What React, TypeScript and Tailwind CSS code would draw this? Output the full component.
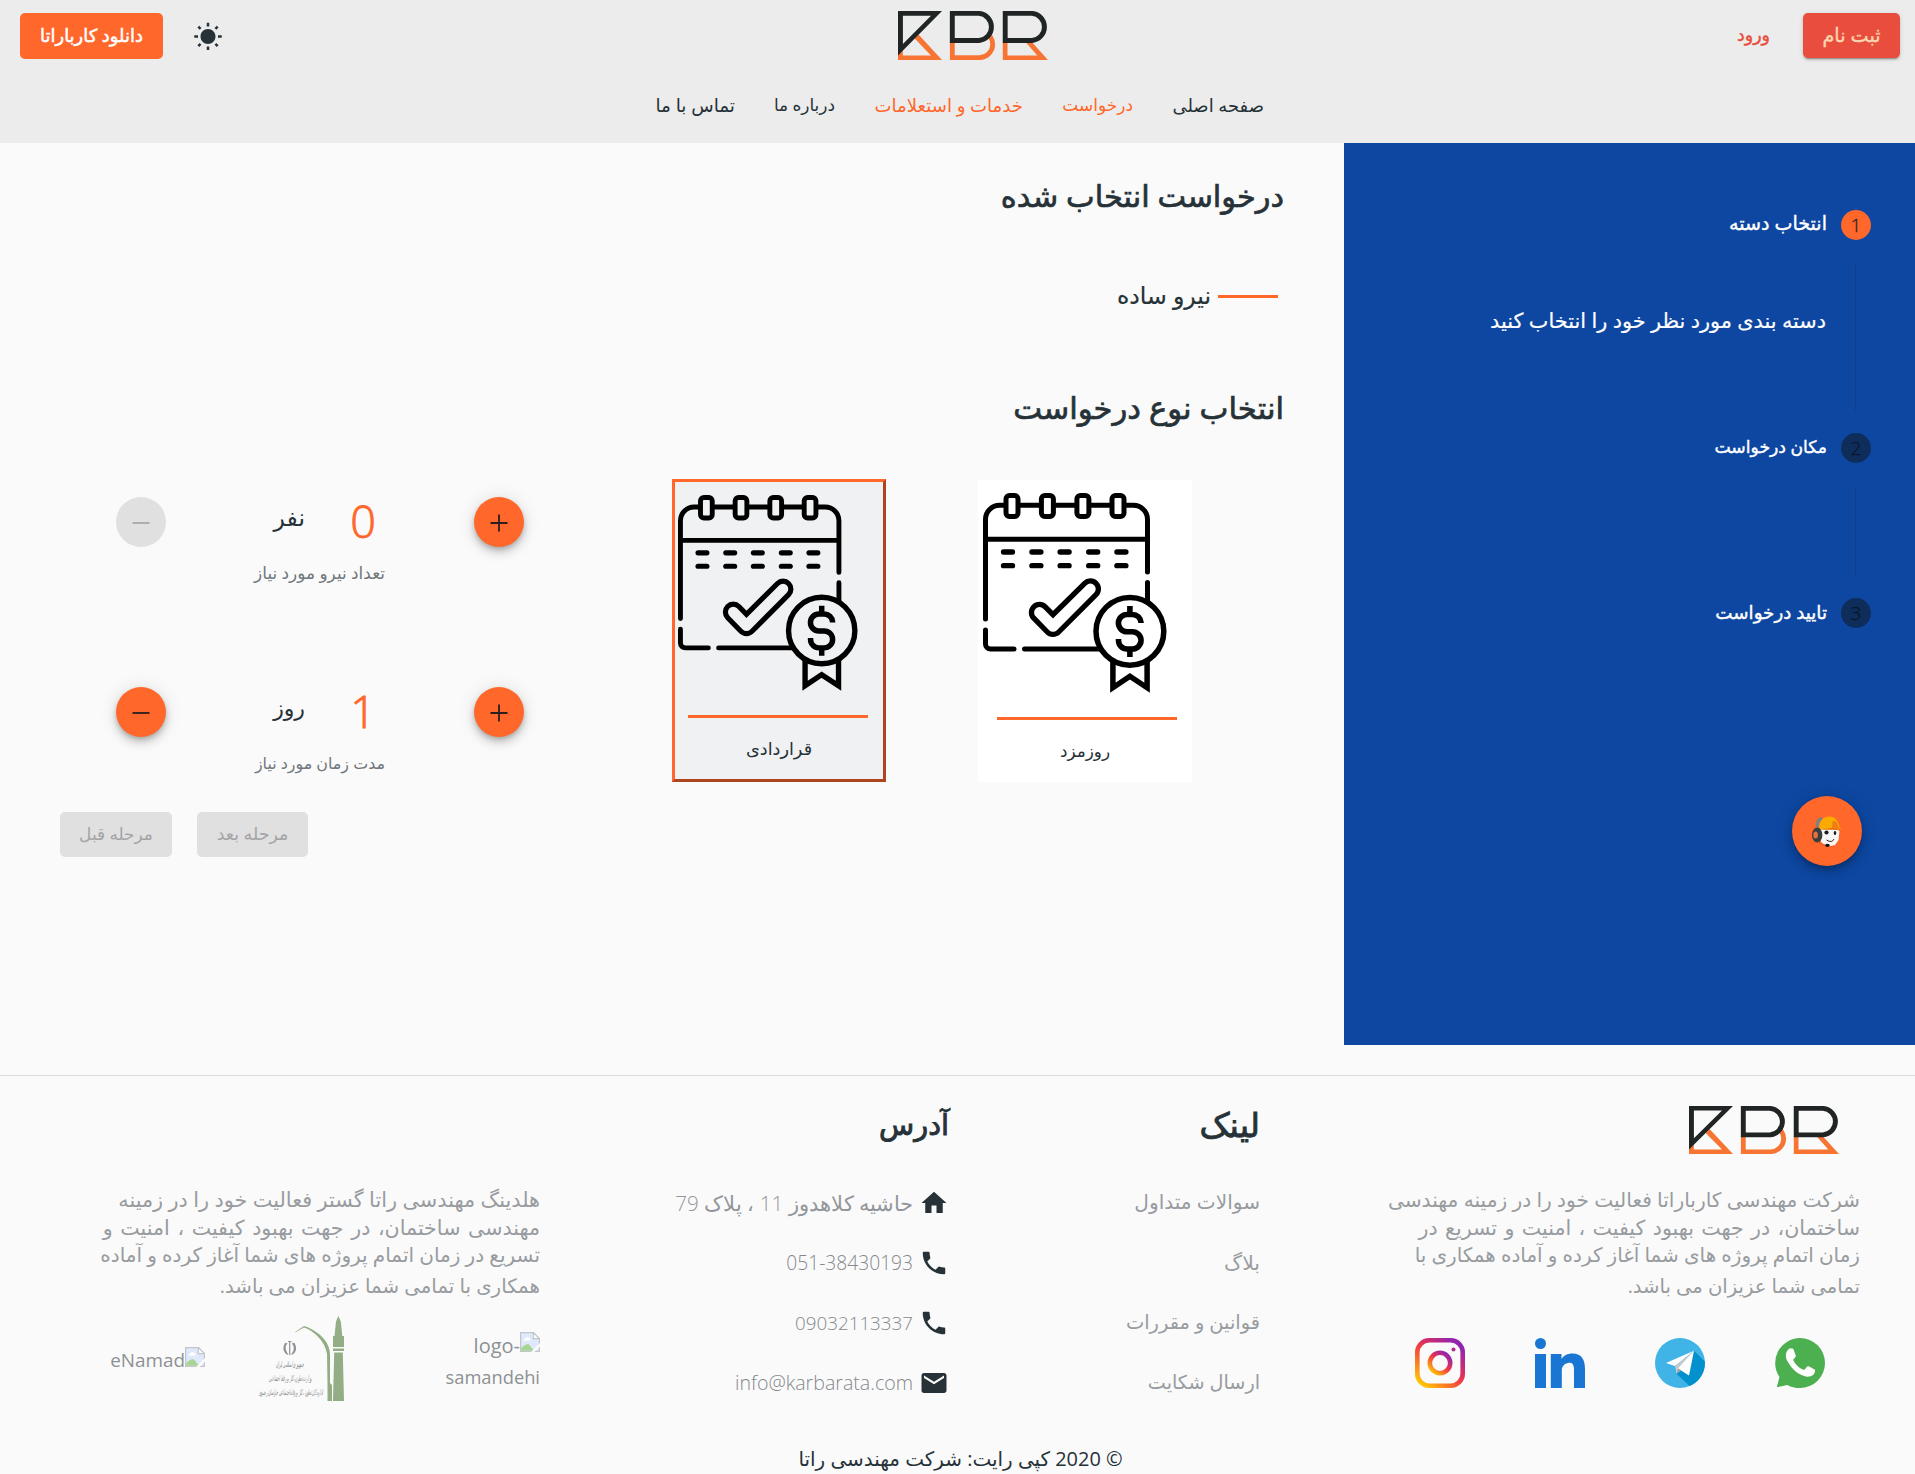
import type { ReactNode } from "react";

const FONT = "font-['Open_Sans','DejaVu_Sans',sans-serif]";

function Logo({ className }: { className?: string }) {
  return (
    <svg viewBox="0 0 150 49" preserveAspectRatio="none" className={className} aria-label="KBR">
      <g fill="#f77433">
        <path d="M0 43.5V49H44L20.500 23.500 16.700 27.500 33 44.500H4.800V38z" />
        <path d="M104.800 31V49H150L133.800 31H127.500L139.300 44.500H109.500V31z" />
      </g>
      <path d="M54.300 30V46.700H81.500A13.500 13.500 0 0 0 94.700 33.500C94.700 30 93.600 27.400 92 25" fill="none" stroke="#f77433" strokeWidth="4.800" />
      <path fillRule="evenodd" fill="#212424" d="M0 0H44L0 44.500zM4.900 4.700V33L33 4.700z" />
      <g fill="none" stroke="#212424" strokeWidth="4.900">
        <path d="M54.300 2.400H81A13.600 13.600 0 0 1 81 29.500H54.300z" />
        <path d="M107.200 2.400H134A13.600 13.600 0 0 1 134 29.500H107.200z" />
      </g>
    </svg>
  );
}

function SunIcon() {
  return (
    <svg viewBox="0 0 24 24" className="mt-px size-[30px]" fill="#263238">
      <path d="M6.760 4.840l-1.800-1.790-1.410 1.410 1.790 1.790 1.420-1.410zM4 10.500H1v2h3v-2zm9-9.950h-2V3.500h2V.550zm7.450 3.910l-1.410-1.410-1.790 1.790 1.410 1.410 1.790-1.790zm-3.210 13.700l1.790 1.800 1.410-1.410-1.800-1.790-1.400 1.400zM20 10.500v2h3v-2h-3zm-8-5c-3.310 0-6 2.690-6 6s2.690 6 6 6 6-2.690 6-6-2.690-6-6-6zm-1 16.950h2V19.500h-2v2.950zm-7.450-3.910l1.410 1.410 1.790-1.800-1.410-1.410-1.790 1.800z" />
    </svg>
  );
}

function CalendarIcon({ className }: { className?: string }) {
  return (
    <svg viewBox="0 0 184 200" preserveAspectRatio="none" className={className} fill="none" stroke="#000" strokeWidth="5">
      <path strokeLinecap="round" d="M2.500 126V26.300A14 14 0 0 1 16.500 12.300H21M37.500 12.300H56M73 12.300H91.500M108.500 12.300H126.500M143.500 12.300H150.500A14 14 0 0 1 164.500 26.300V79M164.500 89.500V109M2.500 137V151A5 5 0 0 0 7.500 156H31M41.500 156H118" />
      <path d="M2.500 46.300H164" />
      {[29, 64.4, 99.9, 135].map((x) => (
        <rect key={x} x={x - 6} y="2.500" width="12" height="21" rx="3.500" />
      ))}
      {[59, 72.7].map((y) =>
        [25, 53.4, 81.6, 110.2, 138.4].map((x) => (
          <path key={`${x}-${y}`} strokeLinecap="round" strokeWidth="5.300" d={`M${x - 4.5} ${y}h9`} />
        )),
      )}
      <path strokeWidth="5.300" d="M62.200 113.800L70 121.700 101.700 90.300A8 8 0 0 1 113 101.700L75.700 139A8 8 0 0 1 64.300 139L50.800 125.200A8 8 0 0 1 62.200 113.800z" />
      <circle cx="146.900" cy="138.300" r="33.900" strokeWidth="5.500" />
      <path strokeWidth="5.600" d="M158 130V129.500A8.500 8.500 0 0 0 149.500 121.500H144A8.600 8.600 0 0 0 144 138.700H149.400A8.600 8.600 0 0 1 149.400 156H144A8.600 8.600 0 0 1 135.500 147.500V146M146.900 113v8M146.900 156v8" />
      <path strokeWidth="5.500" d="M129.900 168V194.700L146.900 183.300 164.100 194.700V168" />
    </svg>
  );
}

function WorkerIcon() {
  return (
    <svg viewBox="0 0 30 31" className="h-[31px] w-[30px]">
      <path d="M8 15.500Q7 24 10 27L16 30.500 23 29 26.500 24 27.500 15 24 12H9z" fill="#f7f7f7" />
      <path d="M4 11C3 5 5 2 10 1L11 4C7 5 7 8 7.500 12z" fill="#7d8284" />
      <path d="M7 12.500C7 4 12 .5 17.500 .5S26.500 4.500 27.500 11.500L30 14 24 13 7 13.500z" fill="#fbab00" />
      <path d="M20.500 5.500C23 4 25.500 6 26.500 11.500L30 14 20 12.500z" fill="#ef7d14" />
      <path d="M8 13.500L20 12 30 14.500 20 13.800z" fill="#e56c0c" />
      <ellipse cx="5.200" cy="19" rx="5.200" ry="7.500" fill="#3b3d40" />
      <ellipse cx="3.600" cy="19" rx="2.300" ry="3.600" fill="#e7713b" />
      <circle cx="14.500" cy="16.500" r="2.100" fill="#1d1d1d" />
      <ellipse cx="23" cy="17" rx="1.300" ry="2" fill="#1d1d1d" />
      <path d="M14.500 24Q20 27.500 22 23" fill="none" stroke="#4a2a1c" strokeWidth="1" />
      <path d="M6 26Q10 29.500 15 29.500" fill="none" stroke="#d65c28" strokeWidth="1" />
      <ellipse cx="15.500" cy="29.300" rx="2.300" ry="1.600" fill="#141414" />
    </svg>
  );
}

function WhatsappIcon() {
  return (
    <svg viewBox="2 2 20 20" className="size-[50px]">
      <path fill="#4caf50" d="M12 2a10 10 0 0 1 0 20c-1.970 0-3.500-.4-5.100-1.250L2.700 21.700l1.100-4.100A10 10 0 0 1 12 2" />
      <path
        fill="#fff"
        transform="translate(-2.300 -2.100) scale(1.180)"
        d="M16.750 13.960c.25.130.41.200.46.300.06.110.04.610-.21 1.180-.2.560-1.240 1.100-1.700 1.120-.46.020-.47.360-2.960-.73-2.490-1.090-3.990-3.750-4.110-3.920-.12-.17-.96-1.380-.92-2.610.05-1.220.69-1.800.95-2.040.24-.26.51-.29.68-.26h.47c.15 0 .36-.06.55.450l.69 1.870c.06.130.1.280.01.440l-.27.410-.39.420c-.12.120-.26.250-.12.500.12.260.62 1.090 1.320 1.780.91.880 1.710 1.170 1.950 1.300.24.140.39.120.54-.04l.81-.94c.19-.25.35-.19.58-.11l1.670.88z"
      />
    </svg>
  );
}

function TelegramIcon() {
  return (
    <svg viewBox="0 0 50 50" className="size-[50px]">
      <circle cx="25" cy="25" r="25" fill="#40b4e6" />
      <path d="M39 12.700L49.900 23.500A25 25 0 0 1 34.500 48.100L21.500 35.700 30 26z" fill="#0391ce" />
      <path d="M11 25L39 12.700 20 28z" fill="#fff" />
      <path d="M20 28L39 12.700 21.700 35.800z" fill="#c3cacf" />
      <path d="M23 30.500L39 12.700 34 37.500z" fill="#fff" />
      <path d="M21.700 35.800L23 30.500 26.500 32.300z" fill="#9aa5ab" />
    </svg>
  );
}

function LinkedinIcon() {
  return (
    <svg viewBox="0 0 50 50" className="size-[50px]" fill="#1976d2">
      <circle cx="5.500" cy="5.500" r="5.500" />
      <path d="M0 16H11V50H0zM15.800 16H26.500V21C28.500 17.700 32.300 15.500 37.500 15.500 47 15.500 50 22 50 31V50H39V32C39 27.500 38 24.800 34.500 24.800 30 24.800 26.800 28.500 26.800 32V50H15.800z" />
    </svg>
  );
}

function InstagramIcon() {
  return (
    <svg viewBox="0 0 50 50" className="size-[50px]">
      <defs>
        <linearGradient id="ig" x1="0.100" y1="0.950" x2="0.850" y2="0.050">
          <stop offset="0" stopColor="#ffc107" />
          <stop offset="0.450" stopColor="#f4473a" />
          <stop offset="0.600" stopColor="#e0305a" />
          <stop offset="1" stopColor="#9225b0" />
        </linearGradient>
      </defs>
      <g fill="none" stroke="url(#ig)" strokeWidth="4.600">
        <rect x="2.300" y="2.300" width="45.400" height="45.400" rx="12" />
        <circle cx="25" cy="25" r="10.200" />
      </g>
      <circle cx="38.500" cy="11.500" r="2" fill="#b02a92" />
    </svg>
  );
}

function EmblemIcon() {
  return (
    <svg viewBox="0 0 85 85" className="mt-[17px] h-[85px] w-[85px] overflow-visible" direction="rtl">
      <g fill="#93ad85">
        <path d="M79.300 0L81.800 5.500 83.300 20H85V31H74V20H75.500L77 5.500zM74 32.500H85V35H74zM75.200 36.500H83.800L85 85H74z" />
        <path d="M36 16L45 10C58 14 71 25 71 38V67L73 69V85H68.500V68.500L68 38C66 25 55 15 45 11.500L36.500 16.200z" />
      </g>
      <g fill="none" stroke="#8f9296" strokeWidth="1.200">
        <path d="M30.700 26V39M28 27Q24 32 28 37.500M33.400 27Q37.500 32 33.400 37.500M26.500 27Q22.500 35 29 38.500M35 27Q39 35 32.500 38.500M29 25.500h3.500" />
      </g>
      <g fill="#808386" fontSize="8" fontStyle="italic">
        <text x="45" y="51" textLength="28" lengthAdjust="spacingAndGlyphs">جمهوری اسلامی ایران</text>
        <text x="53" y="65" textLength="43" lengthAdjust="spacingAndGlyphs">وزارت تعاون، کار و رفاه اجتماعی</text>
        <text x="64" y="79" textLength="64" lengthAdjust="spacingAndGlyphs">اداره کل تعاون، کار و رفاه اجتماعی خراسان رضوی</text>
      </g>
    </svg>
  );
}

function BrokenImage() {
  return (
    <svg viewBox="0 0 20 20" className="-mt-2 size-5 shrink-0">
      <path d="M.6 .6H13.500L19.400 6.500V19.400H.6z" fill="#dfe9fb" stroke="#c3c5c8" strokeWidth="1.200" />
      <path d="M13.300 .6V6.700H19.400z" fill="#fff" stroke="#c3c5c8" strokeWidth="1.200" />
      <path d="M3.500 8.500Q3.500 6.500 5.500 6.500 6.500 4 8.500 5.500 11 5.500 10.500 8.500z" fill="#fff" />
      <path d="M1.200 18.800V16Q6 11 9 12.500L14 18.800z" fill="#a8d494" />
      <path d="M11 20L20 11V14.500L14.500 20z" fill="#fafafa" />
    </svg>
  );
}

const glyphs = {
  home: "M10 20v-6h4v6h5v-8h3L12 3 2 12h3v8z",
  phone: "M6.620 10.790c1.440 2.830 3.760 5.140 6.590 6.590l2.200-2.200c.27-.27.67-.36 1.020-.24 1.120.37 2.330.57 3.570.57.55 0 1 .45 1 1V20c0 .55-.45 1-1 1-9.390 0-17-7.610-17-17 0-.55.45-1 1-1h3.500c.55 0 1 .45 1 1 0 1.250.2 2.450.57 3.570.11.350.03.740-.25 1.020l-2.200 2.200z",
  mail: "M20 4H4c-1.100 0-1.990.9-1.990 2L2 18c0 1.100.9 2 2 2h16c1.100 0 2-.9 2-2V6c0-1.100-.9-2-2-2zm0 4l-8 5-8-5V6l8 5 8-5v2z",
};

const nav = [
  { text: "صفحه اصلی", cls: "w-[91px] text-[18px] text-[#263238]" },
  { text: "درخواست", cls: "w-[70px] text-[17px] text-[#ff672b]" },
  { text: "خدمات و استعلامات", cls: "w-[148px] text-[18.100px] text-[#ff672b]" },
  { text: "درباره ما", cls: "w-[60px] text-[16.900px] text-[#263238]" },
  { text: "تماس با ما", cls: "w-[79px] text-[18.400px] text-[#263238]" },
];

function StepHead({ n, active, label, cls }: { n: number; active?: boolean; label: string; cls: string }) {
  return (
    <div className="flex h-[30px] items-center gap-[14px]">
      <span
        className={`flex size-[30px] items-center justify-center rounded-full pt-px text-[19px] ${
          active ? "bg-[#ff672b] font-light text-[#33231f] [-webkit-text-stroke:0.3px_#33231f]" : "bg-[#0f2d5b] font-light text-[#091528] [-webkit-text-stroke:0.3px_#091528]"
        }`}
      >
        {n}
      </span>
      <span className={`pb-[3px] text-white [-webkit-text-stroke:0.4px_white] ${cls}`}>{label}</span>
    </div>
  );
}

function RoundButton({ sign, disabled }: { sign: "+" | "-"; disabled?: boolean }) {
  return (
    <button
      className={`flex size-[50px] shrink-0 items-center justify-center rounded-full ${
        disabled
          ? "bg-[#e0e0e0] text-[#a9a9a9]"
          : "bg-[#ff672b] text-[#2b1e1c] shadow-[0_3px_5px_-1px_rgba(0,0,0,0.2),0_6px_10px_0_rgba(0,0,0,0.14),0_1px_18px_0_rgba(0,0,0,0.12)]"
      }`}
    >
      <svg viewBox="0 0 18 18" className="mt-[2px] size-[18px]" stroke="currentColor" strokeWidth="1.800">
        <path d={sign === "+" ? "M.5 9H17.500M9 .5V17.500" : "M.5 9H17.500"} />
      </svg>
    </button>
  );
}

function Counter({ value, unit, unitCls, caption, captionCls, minusDisabled }: {
  value: number; unit: string; unitCls: string; caption: string; captionCls: string; minusDisabled?: boolean;
}) {
  return (
    <div className="h-[190px] w-[408px]">
      <div className="flex h-[50px] items-center">
        <RoundButton sign="+" />
        <span className="mr-[98px] w-[26px] pb-[3px] text-center text-[45px] leading-[50px] font-light text-[#ff672b] [-webkit-text-stroke:0.9px_#ff672b]">{value}</span>
        <span className={`mr-[45px] pb-[10px] leading-[30px] text-[#263238] ${unitCls}`}>{unit}</span>
        <div className="mr-auto">
          <RoundButton sign="-" disabled={minusDisabled} />
        </div>
      </div>
      <p className={`mt-[14px] mr-[139px] leading-6 text-[#70767a] ${captionCls}`}>{caption}</p>
    </div>
  );
}

function Line({ children, cls }: { children: ReactNode; cls: string }) {
  return <p className={`leading-7 whitespace-nowrap ${cls}`}>{children}</p>;
}

export default function App() {
  return (
    <div dir="rtl" className={`h-[1474px] w-full overflow-hidden bg-[#fafafa] text-[#263238] ${FONT}`}>
      <header className="h-[143px] bg-[#ececec]">
        <div className="flex h-[72px] items-start">
          <div className="flex w-[867px] items-center gap-[33px] pt-[13px] pr-[15px]">
            <button className="h-[45px] w-[97px] rounded-[5px] bg-[#e84d3d] pb-[2px] text-[19.200px] leading-[43px] text-[#fcd5ae] shadow-[0_3px_1px_-2px_rgba(0,0,0,0.2),0_2px_2px_0_rgba(0,0,0,0.14),0_1px_5px_0_rgba(0,0,0,0.12)] [-webkit-text-stroke:0.4px_#fcd5ae]">
              ثبت نام
            </button>
            <a className="pb-[2px] text-[17.400px] text-[#e84d3d] [-webkit-text-stroke:0.4px_#e84d3d]">ورود</a>
          </div>
          <Logo className="mt-[11px] h-[49px] w-[150px]" />
          <div className="flex flex-1 items-center justify-end gap-[30px] pt-[13px] pl-5">
            <SunIcon />
            <button className="h-[46px] w-[143px] rounded-[5px] bg-[#ff672b] pb-px text-[17.900px] leading-[45px] text-white [-webkit-text-stroke:0.5px_white]">
              دانلود کارباراتا
            </button>
          </div>
        </div>
        <nav className="flex h-[66px] items-center gap-10 pr-[651px] leading-8 whitespace-nowrap">
          {nav.map((n) => (
            <a key={n.text} className={n.cls}>{n.text}</a>
          ))}
        </nav>
      </header>

      <section className="flex h-[902px]">
        <aside className="relative w-[571px] bg-[#0d47a1] pt-[67px] pr-[44px]">
          <StepHead n={1} active label="انتخاب دسته" cls="text-[19.100px]" />
          <div className="mt-[23px] mr-[15px] mb-[22px] h-[148px] border-r border-[#123f8c] pt-[42px] pr-[29px] text-[20.800px] leading-[30px] text-white [-webkit-text-stroke:0.2px_white]">
            دسته بندی مورد نظر خود را انتخاب کنید
          </div>
          <StepHead n={2} label="مکان درخواست" cls="text-[17.200px]" />
          <div className="mt-[23px] mr-[15px] mb-[22px] h-[90px] border-r border-[#123f8c]" />
          <StepHead n={3} label="تایید درخواست" cls="text-[18.300px]" />
          <button className="absolute top-[653px] right-[53px] flex size-[70px] items-center justify-center rounded-full bg-[#ff672b] shadow-[0_3px_5px_-1px_rgba(0,0,0,0.2),0_6px_10px_0_rgba(0,0,0,0.14),0_1px_18px_0_rgba(0,0,0,0.12)]">
            <WorkerIcon />
          </button>
        </aside>

        <main className="flex-1 pt-[33px]">
          <h2 className="pr-[60px] text-[30.400px] leading-10 [-webkit-text-stroke:0.7px_#263238]">درخواست انتخاب شده</h2>
          <div className="mt-[64px] flex h-[30px] items-center gap-[7px] pr-[66px]">
            <span className="mt-[3px] h-[3px] w-[60px] bg-[#ff672b]" />
            <span className="text-[23.600px] leading-[30px] [-webkit-text-stroke:0.2px_#263238]">نیرو ساده</span>
          </div>
          <h2 className="mt-[77px] pr-[60px] text-[30.700px] leading-10 [-webkit-text-stroke:0.7px_#263238]">انتخاب نوع درخواست</h2>

          <div className="mt-[52px] flex h-[303px] pr-[152px]">
            <div className="mt-px h-[302px] w-[214px] bg-white pt-[13px]">
              <CalendarIcon className="mr-[25px] h-[200px] w-[184px]" />
              <div className="mt-6 mr-[15px] h-[3px] w-[180px] bg-[#ff672b]" />
              <p className="mt-[16px] text-center text-[16.800px] leading-[30px]">روزمزد</p>
            </div>
            <div className="mr-[92px] h-[303px] w-[214px] border-[3px] border-t-[#ff672b] border-r-[#ad451f] border-b-[#ad451f] border-l-[#ff672b] bg-[#eff1f3] pt-[13px]">
              <CalendarIcon className="mr-[25px] h-[196px] w-[180px]" />
              <div className="mt-6 mr-[15px] h-[3px] w-[180px] bg-[#ff672b]" />
              <p className="mt-[15px] text-center text-[17.700px] leading-[30px]">قراردادی</p>
            </div>
            <div className="mr-[148px] pt-[18px]">
              <Counter value={0} unit="نفر" unitCls="text-[23.500px]" caption="تعداد نیرو مورد نیاز" captionCls="text-[16.900px]" minusDisabled />
              <Counter value={1} unit="روز" unitCls="text-[22px]" caption="مدت زمان مورد نیاز" captionCls="text-[15.900px]" />
            </div>
          </div>

          <div className="mt-[30px] flex justify-end gap-[25px] pl-[60px] text-[#a3a4a6]">
            <button className="h-[45px] w-[111px] rounded-[5px] bg-[#e0e0e0] pb-[2px] text-[17.400px]">مرحله بعد</button>
            <button className="h-[45px] w-[112px] rounded-[5px] bg-[#e0e0e0] pb-px text-[16.900px]">مرحله قبل</button>
          </div>
        </main>
      </section>

      <footer className="mt-[30px] border-t border-[#dcdcdc]">
        <div className="flex h-[366px] pr-[55px] text-[#989ca0]">
          <div className="w-[600px] pt-[30px]">
            <Logo className="mr-[21px] h-12 w-[150px]" />
            <div className="mt-[31px]">
              <Line cls="text-[20.200px]">شرکت مهندسی کارباراتا فعالیت خود را در زمینه مهندسی</Line>
              <Line cls="text-[20.600px] [word-spacing:2px]">ساختمان، در جهت بهبود کیفیت ، امنیت و تسریع در</Line>
              <Line cls="text-[19.950px]">زمان اتمام پروژه های شما آغاز کرده و آماده همکاری با</Line>
              <Line cls="mt-[3px] text-[19.600px]">تمامی شما عزیزان می باشد.</Line>
            </div>
            <div className="mt-[38px] mr-[35px] flex gap-[70px]">
              <WhatsappIcon />
              <TelegramIcon />
              <LinkedinIcon />
              <InstagramIcon />
            </div>
          </div>

          <div className="w-[311px] pt-[28px]">
            <h3 className="text-[33.500px] leading-10 text-[#263238] [-webkit-text-stroke:0.9px_#263238]">لینک</h3>
            <ul className="mt-7 leading-[60px]">
              <li className="text-[20.100px]">سوالات متداول</li>
              <li className="text-[20.300px]">بلاگ</li>
              <li className="text-[19.400px]">قوانین و مقررات</li>
              <li className="text-[19.200px]">ارسال شکایت</li>
            </ul>
          </div>

          <div className="w-[409px] pt-[28px]">
            <h3 className="text-[28.800px] leading-10 text-[#263238] [-webkit-text-stroke:0.9px_#263238]">آدرس</h3>
            <ul className="mt-[29px] font-light">
              {[
                { d: glyphs.home, t: "حاشیه کلاهدوز 11 ، پلاک 79", c: "text-[20.600px]" },
                { d: glyphs.phone, t: "051-38430193", c: "text-[19.200px]" },
                { d: glyphs.phone, t: "09032113337", c: "text-[18.800px]" },
                { d: glyphs.mail, t: "info@karbarata.com", c: "text-[19.600px]" },
              ].map((r) => (
                <li key={r.t} className="flex h-[60px] items-center gap-[6px]">
                  <svg viewBox="0 0 24 24" className="size-[30px]" fill="#263238">
                    <path d={r.d} />
                  </svg>
                  <bdi className={`${r.d === glyphs.home ? "text-[#92969a]" : "text-[#85898d]"} ${r.c}`} dir={r.d === glyphs.home ? "rtl" : "ltr"}>{r.t}</bdi>
                </li>
              ))}
            </ul>
          </div>

          <div className="flex-1 pt-[109px]">
            <Line cls="text-[20.800px]">هلدینگ مهندسی راتا گستر فعالیت خود را در زمینه</Line>
            <Line cls="text-[20.600px] [word-spacing:2.300px]">مهندسی ساختمان، در جهت بهبود کیفیت ، امنیت و</Line>
            <Line cls="text-[20px]">تسریع در زمان اتمام پروژه های شما آغاز کرده و آماده</Line>
            <Line cls="mt-[3px] text-[19.800px]">همکاری با تمامی شما عزیزان می باشد.</Line>
            <div className="flex items-start leading-[31px]">
              <div className="mt-[30px] w-[95px] text-[20px] text-[#8d9195]">
                <div className="flex items-center">
                  <BrokenImage />
                  <span dir="ltr">logo-</span>
                </div>
                <div className="text-[18.300px]">samandehi</div>
              </div>
              <div className="-mt-px mr-[101px]">
                <EmblemIcon />
              </div>
              <div className="mt-[45px] mr-[54px] flex items-center text-[18.900px] text-[#8d9195]">
                <BrokenImage />
                <span>eNamad</span>
              </div>
            </div>
          </div>
        </div>
        <p className="pl-[6px] text-center text-[19.950px] leading-[34px]">© 2020 کپی رایت: شرکت مهندسی راتا</p>
      </footer>
    </div>
  );
}
